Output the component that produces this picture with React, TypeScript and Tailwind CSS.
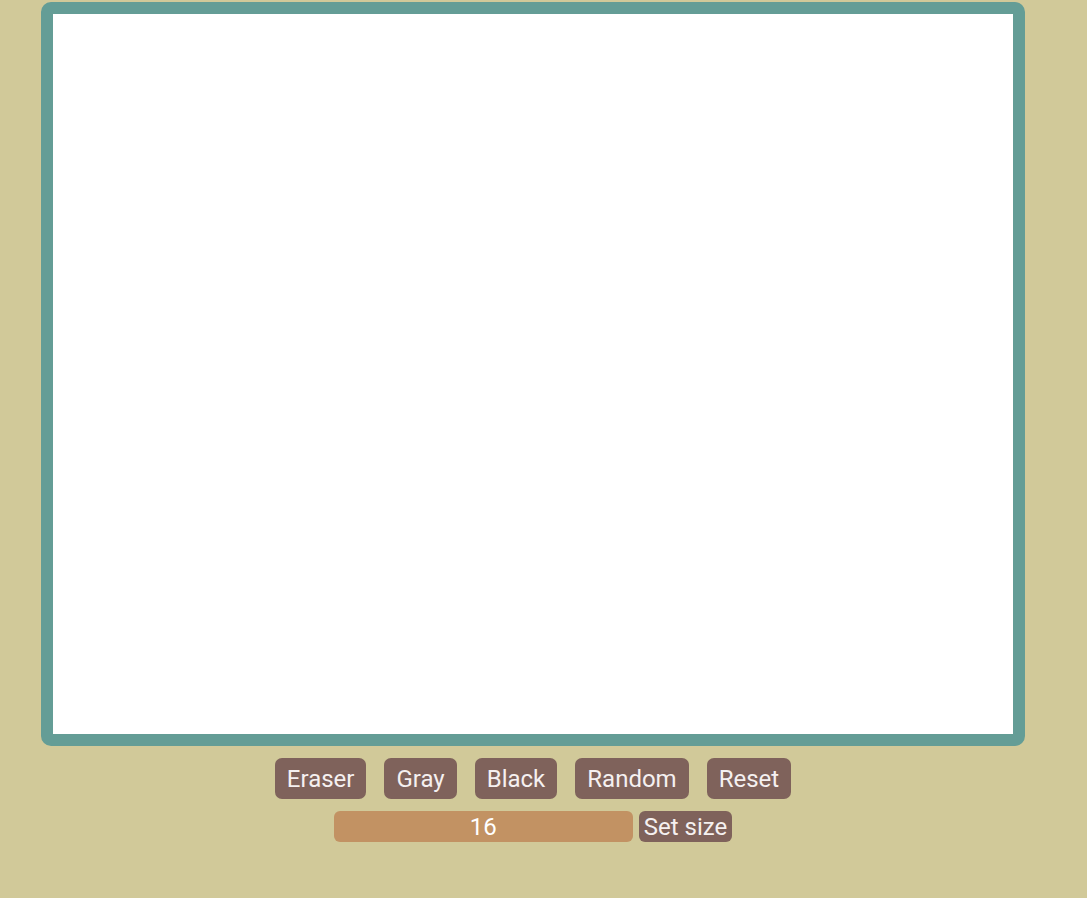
import { useState } from 'react';

const BUTTONS = ['Eraser', 'Gray', 'Black', 'Random', 'Reset'];

export default function App() {
  const [size, setSize] = useState('16');

  return (
    <div className="min-h-[898px] w-full bg-[#d1c999] font-['Roboto',sans-serif]">
      <div className="w-[1066px] flex flex-col items-center pt-[2px]">
        {/* drawing board */}
        <div className="w-[984px] h-[744px] rounded-[10px] border-[12px] border-[#649d96] bg-white" />

        {/* colour buttons */}
        <div className="flex gap-[18px] mt-[12px]">
          {BUTTONS.map((b) => (
            <button
              key={b}
              className="h-[41px] px-[12px] rounded-[7px] bg-[#7f625b] text-[#f5f0f0] text-[24px] leading-none"
            >
              {b}
            </button>
          ))}
        </div>

        {/* grid size */}
        <div className="flex gap-[6px] mt-[12px]">
          <input
            value={size}
            onChange={(e) => setSize(e.target.value)}
            className="w-[299px] h-[31px] rounded-[6px] bg-[#c29263] text-white text-[24px] leading-none text-center outline-none"
          />
          <button className="h-[31px] px-[5px] rounded-[6px] bg-[#7f625b] text-[#f5f0f0] text-[24px] leading-none">
            Set size
          </button>
        </div>
      </div>
    </div>
  );
}
